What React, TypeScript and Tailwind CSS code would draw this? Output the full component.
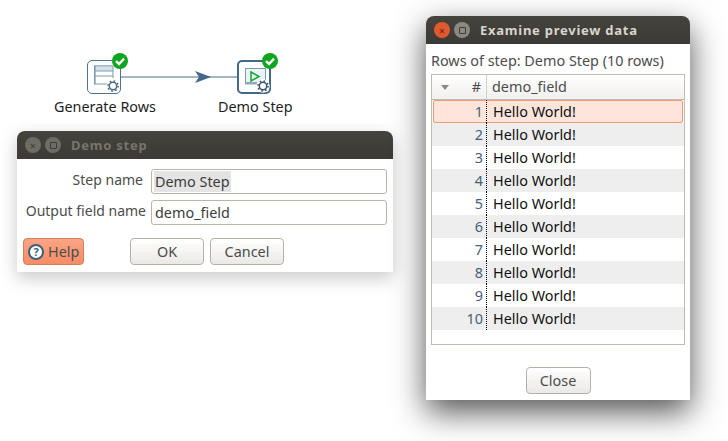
const FONT = "font-['Noto_Sans',sans-serif]";

function CheckBadge({ className }: { className: string }) {
  return (
    <svg className={`absolute ${className}`} width="16" height="16" viewBox="0 0 16 16">
      <circle cx="8" cy="8" r="8" fill="#0fa51f" />
      <path d="M4 8.2 L7 11 L12 5.6" fill="none" stroke="#fff" strokeWidth="2.4" />
    </svg>
  );
}

function Gear({ x, y, color }: { x: number; y: number; color: string }) {
  return (
    <g transform={`translate(${x} ${y})`}>
      <circle r="6.8" fill="#fff" />
      <circle r="3.7" fill="none" stroke={color} strokeWidth="1.5" />
      <circle r="5.1" fill="none" stroke={color} strokeWidth="1.6" strokeDasharray="1.6 2.4" />
    </g>
  );
}

function GenerateIcon() {
  return (
    <svg width="36" height="36" viewBox="0 0 36 36">
      <rect x="0.5" y="0.5" width="33" height="33" rx="4.5" fill="#fff" stroke="#4f7390" />
      <rect x="7" y="6" width="19" height="18" fill="#fff" />
      <rect x="7" y="6" width="19" height="5" fill="#d5e1ea" />
      <path d="M7 5.8H26M7 11H26M7 16H26M7 24H21" stroke="#7d9ab0" />
      <path d="M26 5.8V18" stroke="#7d9ab0" />
      <rect x="7" y="6" width="1.6" height="18" fill="#7d9ab0" />
      <Gear x={26} y={26} color="#4f6b80" />
    </svg>
  );
}

function DemoIcon() {
  return (
    <svg width="36" height="36" viewBox="0 0 36 36">
      <rect x="1" y="1" width="32" height="32" rx="4" fill="#fff" stroke="#44688a" strokeWidth="2" />
      <rect x="8.5" y="8.5" width="20" height="14" fill="#edf2f6" stroke="#7d9ab0" />
      <rect x="8" y="22" width="13" height="2.5" fill="#8fa8bb" />
      <path d="M14 12 L22 16.5 L14 21 Z" fill="none" stroke="#12a832" strokeWidth="1.5" />
      <Gear x={26} y={26} color="#3f5468" />
    </svg>
  );
}

function WinButton({ kind, active }: { kind: 'close' | 'max'; active?: boolean }) {
  const bg = kind === 'close' && active ? 'bg-[#e0592f]' : active ? 'bg-[#8b8880]' : 'bg-[#6f6c65]';
  const mark = kind === 'close' && active ? 'text-[#6e2410]' : 'text-[#3e3c37]';
  return (
    <div className={`flex h-[16px] w-[16px] items-center justify-center rounded-full text-[11px] leading-none ${bg} ${mark}`}>
      {kind === 'close' ? '×' : <span className="h-[7px] w-[7px] rounded-[1px] border border-[#3e3c37]" />}
    </div>
  );
}

function TitleBar({ title, active }: { title: string; active?: boolean }) {
  return (
    <div className="flex h-7 items-center rounded-t-lg bg-gradient-to-b from-[#45433e] to-[#3c3a35] pl-2">
      <div className="flex gap-[4px]">
        <WinButton kind="close" active={active} />
        <WinButton kind="max" active={active} />
      </div>
      <span className={`ml-[10px] pt-px text-[13px] font-bold tracking-[0.75px] ${active ? 'text-[#d8d5cd]' : 'text-[#77746c]'}`}>{title}</span>
    </div>
  );
}

function Btn({ label, className }: { label: string; className: string }) {
  return (
    <button className={`flex h-[27px] items-center justify-center rounded border border-[#b4b1a8] bg-gradient-to-b from-white to-[#ebe9e6] text-[14.4px] text-[#4c4c4c] ${className}`}>
      {label}
    </button>
  );
}

function Field({ label, value, selected, labelPad }: { label: string; value: string; selected?: boolean; labelPad: string }) {
  return (
    <div className="flex items-center">
      <div className={`w-[129px] whitespace-nowrap pb-[4px] text-right text-sm text-[#4c4c4c] ${labelPad}`}>{label}</div>
      <div className="ml-[5px] flex h-[25px] w-[236px] items-center rounded-[3px] border border-[#b8b5ac] bg-white pl-[2px] text-[14.4px] text-[#3c3c3c]">
        <span className={selected ? 'bg-[#e4e4e4] px-px' : 'px-px'}>{value}</span>
      </div>
    </div>
  );
}

const rows = Array.from({ length: 10 }, (_, i) => i + 1);

export default function App() {
  return (
    <div className={`relative h-[441px] w-[728px] overflow-hidden bg-white ${FONT}`}>
      {/* canvas */}
      <div className="absolute left-[87px] top-[60px]"><GenerateIcon /></div>
      <CheckBadge className="left-[112px] top-[53px]" />
      <svg className="absolute left-[120px] top-[70px]" width="120" height="14" viewBox="0 0 120 14">
        <path d="M0 7H118" stroke="#4a6a84" strokeWidth="1" />
        <path d="M75 1 L91 7 L75 13 L79 7 Z" fill="#44688a" />
      </svg>
      <div className="absolute left-[237px] top-[60px]"><DemoIcon /></div>
      <CheckBadge className="left-[262px] top-[53px]" />
      <div className="absolute left-[54px] top-[97px] text-[14.4px] leading-5 text-[#1e1e1e]">Generate Rows</div>
      <div className="absolute left-[218px] top-[97px] text-[14.4px] leading-5 text-[#1e1e1e]">Demo Step</div>

      {/* Demo step dialog */}
      <div className="absolute left-[17px] top-[131px] h-[141px] w-[376px] rounded-t-lg bg-white shadow-[0_6px_18px_rgba(0,0,0,0.22)]">
        <TitleBar title="Demo step" />
        <div className="flex flex-col gap-[6px] pt-[10px]">
          <Field label="Step name" value="Demo Step" selected labelPad="pr-[3px]" />
          <Field label="Output field name" value="demo_field" labelPad="pr-0" />
        </div>
        <div className="mt-[13px] flex pl-[6px]">
          <button className="flex h-[27px] w-[61px] items-center gap-[4px] rounded border border-[#d0805a] bg-gradient-to-b from-[#f9a584] to-[#f58c66] pl-[4px] text-[14.4px] text-[#4c4c4c]">
            <span className="flex h-[16px] w-[16px] items-center justify-center rounded-full border-2 border-[#3f5f7c] bg-white text-[11px] font-bold leading-none text-[#3f5f7c]">?</span>
            Help
          </button>
          <Btn label="OK" className="ml-[46px] w-[74px]" />
          <Btn label="Cancel" className="ml-[6px] w-[74px]" />
        </div>
      </div>

      {/* preview window */}
      <div className="absolute left-[426px] top-[16px] flex h-[384px] w-[264px] flex-col rounded-t-lg bg-white shadow-[0_12px_32px_rgba(0,0,0,0.68)]">
        <TitleBar title="Examine preview data" active />
        <div className="pl-[5px] pt-[7px] text-[14.4px] leading-5 text-[#4c4c4c]">Rows of step: Demo Step (10 rows)</div>
        <div className="mx-[5px] mt-[3px] h-[271px] border border-[#bdbbb2]">
          <div className="flex h-[25px] border-b border-[#bdbbb2] bg-gradient-to-b from-white to-[#f1f0ee] text-[14.4px] text-[#4c4c4c]">
            <div className="flex w-[55px] items-center justify-between border-r border-[#d2d0ca] pl-[9px] pr-[5px]">
              <span className="h-0 w-0 border-x-4 border-t-[5px] border-x-transparent border-t-[#8a8a8a]" />
              <span>#</span>
            </div>
            <div className="flex items-center pl-[5px]">demo_field</div>
          </div>
          <div>
            {rows.map((n) => (
              <div key={n} className={`relative flex h-[23px] items-center text-[14.4px] ${n % 2 === 0 ? 'bg-[#eeeeee]' : 'bg-white'}`}>
                {n === 1 && <div className="absolute inset-x-px inset-y-0 rounded-[2px] border border-[#ef9a72] bg-[#fde5dc]" />}
                <div className="relative flex h-full w-[55px] items-center justify-end border-r border-dotted border-black pr-[3px] text-[#44617a]">{n}</div>
                <div className="relative pl-[6px] text-[#111]">Hello World!</div>
              </div>
            ))}
          </div>
        </div>
        <div className="mt-[22px] flex justify-center">
          <Btn label="Close" className="w-[65px]" />
        </div>
      </div>
    </div>
  );
}
